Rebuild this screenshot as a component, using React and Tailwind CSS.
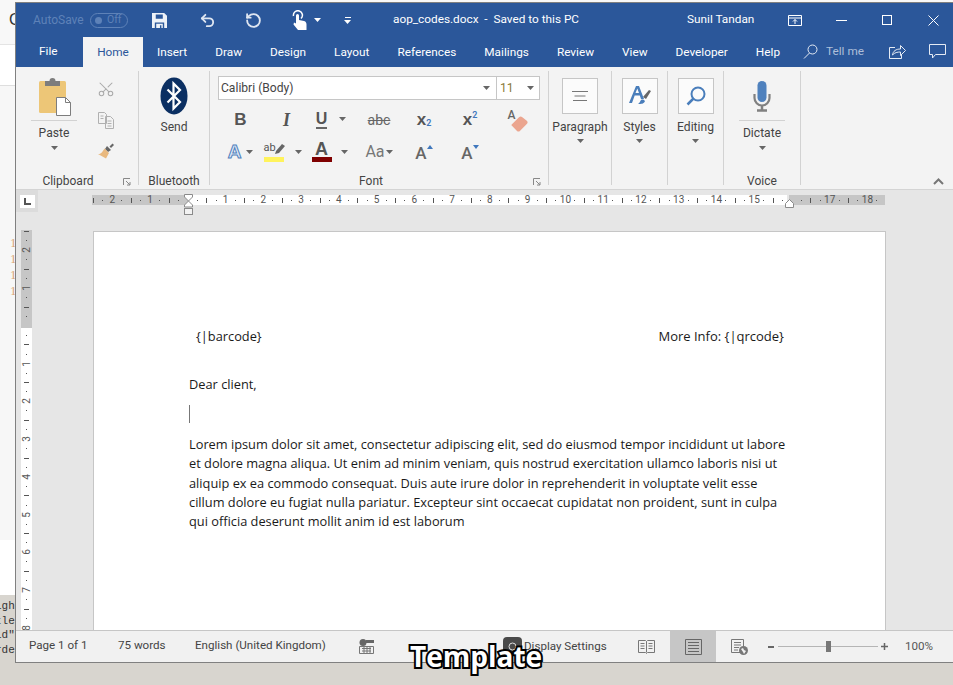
import React from 'react';
import { Undo2, RotateCcw, Scissors } from 'lucide-react';

const tabs = ['Insert', 'Draw', 'Design', 'Layout', 'References', 'Mailings', 'Review', 'View', 'Developer', 'Help'];

const bodyLines = [
    'Lorem ipsum dolor sit amet, consectetur adipiscing elit, sed do eiusmod tempor incididunt ut labore',
    'et dolore magna aliqua. Ut enim ad minim veniam, quis nostrud exercitation ullamco laboris nisi ut',
    'aliquip ex ea commodo consequat. Duis aute irure dolor in reprehenderit in voluptate velit esse',
    'cillum dolore eu fugiat nulla pariatur. Excepteur sint occaecat cupidatat non proident, sunt in culpa',
    'qui officia deserunt mollit anim id est laborum',
];

// small dropdown triangle used all over the ribbon
const Caret = ({ color = '#666', className = '' }) => (
    <svg width="7" height="4" viewBox="0 0 7 4" className={className}>
        <path d="M0 0h7L3.5 4z" fill={color} />
    </svg>
);

const Launcher = () => (
    <svg width="8" height="8" viewBox="0 0 8 8" className="absolute right-[7px] bottom-[-1px]">
        <path d="M.5 7V.5H7M3 3l4 4M7 4v3H4" fill="none" stroke="#888" />
    </svg>
);

const GroupLabel = ({ children }) => (
    <div className="mb-[-3px] mt-auto text-center text-[12px] leading-[14px] text-[#444]">{children}</div>
);

const Tick = ({ k, vertical }) => {
    const n = Math.abs(k) / 4;
    // 0 has no mark, 16 sits under the right indent marker
    if (k === 0 || k === 64) return null;
    if (k % 4 === 0) {
        return <span className={`text-[10px] leading-none text-[#555] ${vertical ? '-rotate-90' : ''}`}>{n}</span>;
    }
    if (k % 2 === 0) {
        return <span className={vertical ? 'h-px w-[5px] bg-[#555]' : 'h-[5px] w-px bg-[#555]'} />;
    }
    return <span className="h-px w-px bg-[#555]" />;
};

const hTicks = Array.from({ length: 84 }, (_, i) => i - 10);
const vTicks = Array.from({ length: 44 }, (_, i) => i - 10);

const HRuler = () => (
    <div className="relative mt-[5px] h-[10px] w-[793px] bg-[linear-gradient(to_right,#c6c6c6_96px,#fff_96px,#fff_695px,#e6e6e6_695px,#e6e6e6_697px,#c6c6c6_697px)]">
        <div className="ml-[-3.2px] flex h-full overflow-hidden">
            {hTicks.map((k) => (
                <div key={k} className="flex h-full w-[9.45px] shrink-0 items-center justify-center">
                    <Tick k={k} />
                </div>
            ))}
        </div>
        {/* indent markers */}
        <svg width="10" height="21" viewBox="0 0 10 21" className="absolute left-[92px] top-[-1px]">
            <path d="M.5.5h8V3L4.5 7 .5 3zM4.5 7l4 4v2h-8v-2z" fill="#fff" stroke="#8a8a8a" />
            <rect x=".5" y="14.5" width="8" height="6" fill="#f2f2f2" stroke="#8a8a8a" />
        </svg>
        <svg width="10" height="9" viewBox="0 0 10 9" className="absolute left-[693px] top-[4px]">
            <path d="M.5 8.5V4.500l4-4 4 4v4z" fill="#fff" stroke="#8a8a8a" />
        </svg>
    </div>
);

const VRuler = () => (
    <div className="ml-[5px] mt-[18px] h-[400px] w-[11px] overflow-hidden bg-[linear-gradient(to_bottom,#c6c6c6_98px,#fff_98px)]">
        <div className="mt-[-3.2px] flex flex-col">
            {vTicks.map((k) => (
                <div key={k} className="flex h-[9.45px] w-full shrink-0 items-center justify-center">
                    <Tick k={k} vertical />
                </div>
            ))}
        </div>
    </div>
);

const BigBox = ({ children }) => (
    <div className="mx-auto mt-[7px] flex h-[36px] w-[36px] items-center justify-center border border-[#c6c6c6] bg-[#fbfbfb]">
        {children}
    </div>
);

const MenuGroup = ({ width, label, children }) => (
    <div className={`flex h-[114px] flex-col items-center border-r border-[#d2d2d2] ${width}`}>
        <div className="w-full">
            <BigBox>{children}</BigBox>
        </div>
        <div className="mt-[4px] text-[12.1px] leading-[18px] text-[#444]">{label}</div>
        <Caret className="mt-[3px]" />
    </div>
);

const FontCell = ({ width, children }) => (
    <div className={`flex h-[32px] items-center justify-center ${width}`}>{children}</div>
);

const cellWidths = ['w-[45px]', 'w-[47px]', 'w-[47px]', 'w-[44px]', 'w-[46px]', 'w-[46px]', 'w-[47px]'];

const Ribbon = () => (
    <div className="flex h-[123px] border-b border-[#d4d4d4] bg-[#f3f3f3] pt-[4px] text-[#444]">
        {/* Clipboard */}
        <div className="relative flex h-[114px] w-[123px] flex-col border-r border-[#d2d2d2]">
            <div className="flex">
                <div className="ml-[15px] flex w-[46px] flex-col items-center">
                    <svg width="36" height="38" viewBox="0 0 36 38" className="mt-[7px]">
                        <rect x="3" y="3" width="27" height="32" rx="1.5" fill="#edc677" />
                        <path d="M9 3h15v5H9zM13.5 3a3 3 0 0 1 6 0z" fill="#7d7d7d" />
                        <path d="M20.5 19.5h9l5 5v13h-14z" fill="#fff" stroke="#7d7d7d" />
                        <path d="M29.5 19.5v5h5" fill="none" stroke="#7d7d7d" />
                    </svg>
                    <div className="mt-[4px] h-px w-full bg-[#d2d2d2]" />
                    <div className="mt-[3px] text-[12.1px] leading-[18px]">Paste</div>
                    <Caret className="mt-[4px]" />
                </div>
                <div className="ml-[14px] flex w-[30px] flex-col items-center">
                    <Scissors size={18} strokeWidth={1.4} color="#aaaaaa" className="mt-[9px] -rotate-90" />
                    <svg width="18" height="18" viewBox="0 0 18 18" className="mt-[13px]">
                        <path d="M1.5 1.5h6l2 2v9h-8zM8.5 5.5h5l3 3v9h-8z" fill="#f3f3f3" stroke="#b0b0b0" />
                        <path d="M3.5 5h3M3.5 7.5h3M10.5 10h4M10.5 12.500h4M10.500 15h4" stroke="#b0b0b0" />
                    </svg>
                    <svg width="18" height="18" viewBox="0 0 18 18" className="mt-[13px]">
                        <path d="M10 4l4 4-3 2-3-3z" fill="#666" />
                        <path d="M12.500 4.500L15.500 1.500l1.500 1.500-3 3z" fill="#666" />
                        <path d="M7.500 6.500l4.500 4.500-3 5.500-8-4.500c3 .5 5-3 6.500-5.500z" fill="#e9b97f" />
                    </svg>
                </div>
            </div>
            <GroupLabel>
                <span className="mr-[18px]">Clipboard</span>
            </GroupLabel>
            <Launcher />
        </div>

        {/* Bluetooth */}
        <div className="flex h-[114px] w-[71px] flex-col items-center border-r border-[#d2d2d2]">
            <svg width="28" height="38" viewBox="0 0 28 38" className="mt-[6px]">
                <ellipse cx="14" cy="19" rx="13.500" ry="18.500" fill="#0b2f62" />
                <path d="M7.500 12.500L20 25l-6.500 6.500V6.500L20 13 7.500 25.500" fill="none" stroke="#fff" strokeWidth="2.200" />
            </svg>
            <div className="mt-[3px] text-[12.1px] leading-[18px]">Send</div>
            <GroupLabel>Bluetooth</GroupLabel>
        </div>

        {/* Font */}
        <div className="relative flex h-[114px] w-[339px] flex-col border-r border-[#d2d2d2] pl-[8px]">
            <div className="mt-[5px] flex h-[24px]">
                <div className="flex w-[279px] items-center border border-[#c6c6c6] bg-white pl-[2px] pr-[6px] text-[12.1px]">
                    <span>Calibri (Body)</span>
                    <Caret className="ml-auto" />
                </div>
                <div className="ml-[-1px] flex w-[44px] items-center border border-[#c6c6c6] bg-white pl-[3px] pr-[5px] text-[12.1px]">
                    <span className="text-[#8a7a3a]">11</span>
                    <Caret className="ml-auto" />
                </div>
            </div>
            <div className="mt-[4px] flex">
                <FontCell width={cellWidths[0]}>
                    <span className="font-['Liberation_Sans'] text-[17px] font-bold text-[#555]">B</span>
                </FontCell>
                <FontCell width={cellWidths[1]}>
                    <span className="font-['Liberation_Serif'] text-[18px] font-bold italic text-[#555]">I</span>
                </FontCell>
                <FontCell width={cellWidths[2]}>
                    <span className="ml-[-5px] border-b-2 border-[#666] font-['Liberation_Sans'] text-[16px] font-bold leading-[16px] text-[#555]">U</span>
                    <Caret className="ml-[12px] mb-[3px]" />
                </FontCell>
                <FontCell width={cellWidths[3]}>
                    <span className="text-[14px] text-[#666] line-through">abc</span>
                </FontCell>
                <FontCell width={cellWidths[4]}>
                    <span className="font-['Liberation_Sans'] text-[17px] font-bold text-[#555]">x</span>
                    <span className="mt-[8px] text-[9px] font-semibold text-[#3f77bd]">2</span>
                </FontCell>
                <FontCell width={cellWidths[5]}>
                    <span className="font-['Liberation_Sans'] text-[17px] font-bold text-[#555]">x</span>
                    <span className="mb-[8px] text-[9px] font-semibold text-[#3f77bd]">2</span>
                </FontCell>
                <FontCell width={cellWidths[6]}>
                    <div className="relative h-[24px] w-[20px]">
                        <span className="absolute left-[1px] top-[-2px] text-[12px] font-medium text-[#666]">A</span>
                        <svg width="20" height="16" viewBox="0 0 18 14" className="absolute left-[2px] top-[8px]">
                            <path d="M2 8l7-7c1-1 2-1 3 0l4 3c1 1 1 2 0 3l-6 6c-1 1-2 1-3 0z" fill="#eba58f" />
                        </svg>
                    </div>
                </FontCell>
            </div>
            <div className="flex">
                <FontCell width={cellWidths[0]}>
                    <span className="font-['Liberation_Sans'] text-[19px] font-bold text-[#dfe9f6] [-webkit-text-stroke:1px_#4f81bd]">A</span>
                    <Caret className="ml-[5px]" />
                </FontCell>
                <FontCell width={cellWidths[1]}>
                    <div className="ml-[-8px] flex flex-col items-center">
                        <div className="flex h-[15px] items-start">
                            <span className="text-[11px] leading-[12px] text-[#555]">ab</span>
                            <svg width="12" height="12" viewBox="0 0 12 12" className="ml-[-2px] mt-[1px]">
                                <path d="M1 11l1-3 6-7 3 2-6 7z" fill="#666" />
                            </svg>
                        </div>
                        <div className="h-[5px] w-[20px] bg-[#fff35c]" />
                    </div>
                    <Caret className="ml-[9px]" />
                </FontCell>
                <FontCell width={cellWidths[2]}>
                    <div className="ml-[-8px] flex flex-col items-center">
                        <span className="font-['Liberation_Sans'] text-[18px] font-bold leading-[15px] text-[#555]">A</span>
                        <div className="h-[5px] w-[20px] bg-[#7f0000]" />
                    </div>
                    <Caret className="ml-[9px]" />
                </FontCell>
                <FontCell width={cellWidths[3]}>
                    <span className="text-[16px] text-[#777]">Aa</span>
                    <Caret className="ml-[1px]" />
                </FontCell>
                <FontCell width={cellWidths[4]}>
                    <span className="mt-[3px] text-[17px] font-medium text-[#666]">A</span>
                    <svg width="6" height="4" viewBox="0 0 6 4" className="mb-[10px]">
                        <path d="M0 4h6L3 0z" fill="#3f77bd" />
                    </svg>
                </FontCell>
                <FontCell width={cellWidths[5]}>
                    <span className="mt-[3px] text-[17px] font-medium text-[#666]">A</span>
                    <svg width="6" height="4" viewBox="0 0 6 4" className="mb-[10px]">
                        <path d="M0 0h6L3 4z" fill="#3f77bd" />
                    </svg>
                </FontCell>
            </div>
            <GroupLabel>
                <span className="mr-[24px]">Font</span>
            </GroupLabel>
            <Launcher />
        </div>

        <MenuGroup width="w-[63px]" label="Paragraph">
            <svg width="16" height="10" viewBox="0 0 16 10">
                <path d="M0 .5h16M2.500 5h11M1 9.500h14" stroke="#777" />
            </svg>
        </MenuGroup>
        <MenuGroup width="w-[56px]" label="Styles">
            <svg width="24" height="24" viewBox="0 0 24 24">
                <path d="M1 19L8 2h3l5 13h-3l-1.200-3.500H6.700L4 19zM7.500 9h3.500L9.300 4.500z" fill="#4a7ebb" />
                <path d="M15 13l6-7 2 1-5 8z" fill="#666" />
                <path d="M13 16c2-1 3 0 4 1-1 3-4 3-7 3 2-1 2-3 3-4z" fill="#4a7ebb" />
            </svg>
        </MenuGroup>
        <MenuGroup width="w-[56px]" label="Editing">
            <svg width="20" height="20" viewBox="0 0 20 20">
                <circle cx="12" cy="8" r="6.500" fill="none" stroke="#4a7ebb" strokeWidth="2" />
                <path d="M7.500 12.500L1.500 18.500" stroke="#4a7ebb" strokeWidth="2.500" />
            </svg>
        </MenuGroup>

        {/* Voice */}
        <div className="flex h-[114px] w-[77px] flex-col items-center border-r border-[#d2d2d2]">
            <svg width="18" height="31" viewBox="0 0 18 31" className="mt-[10px]">
                <rect x="4.500" y="0" width="9" height="21" rx="4.500" fill="#4f81bd" />
                <path d="M1.500 13v4a7.500 7.500 0 0 0 15 0v-4" fill="none" stroke="#808080" strokeWidth="2.200" />
                <path d="M9 24v5M4 29.500h10" stroke="#808080" strokeWidth="2.500" />
            </svg>
            <div className="mt-[8px] h-px w-[46px] bg-[#d2d2d2]" />
            <div className="mt-[3px] text-[12.1px] leading-[18px]">Dictate</div>
            <Caret className="mt-[4px]" />
            <GroupLabel>Voice</GroupLabel>
        </div>

        {/* collapse arrow */}
        <div className="flex h-[114px] flex-1 items-end justify-end pr-[12px]">
            <svg width="11" height="7" viewBox="0 0 11 7">
                <path d="M1 6l4.500-4.500L10 6" fill="none" stroke="#777" strokeWidth="2" />
            </svg>
        </div>
    </div>
);

const TitleBar = () => (
    <div className="flex h-[34px] items-center bg-[#2b579a] text-[11.8px] text-white">
        <div className="flex w-[377px] items-center pl-[17px]">
            <span className="w-[50px] text-[12px] text-[#5e82b8]">AutoSave</span>
            <div className="ml-[7px] flex h-[15px] w-[38px] items-center rounded-full border border-[#5e82b8] pl-[4px]">
                <span className="h-[7px] w-[7px] rounded-full bg-[#5e82b8]" />
                <span className="ml-[5px] text-[10.5px] leading-none text-[#5e82b8]">Off</span>
            </div>
            <svg width="15" height="15" viewBox="0 0 16 16" className="ml-[24px]">
                <path
                    fillRule="evenodd"
                    d="M0 0h13l3 3v13H0zM4 1.500v4.500h7.500V1.500zM3 10v6h10v-6zM4.500 11.500h7V16h-1.500v-3H8.500v3h-4z"
                    fill="#eef2f8"
                />
            </svg>
            <Undo2 size={17} strokeWidth={2.6} color="#dfe6f1" className="ml-[32px]" />
            <RotateCcw size={17} strokeWidth={2.6} color="#dfe6f1" className="ml-[29px]" />
            <svg width="16" height="20" viewBox="0 0 16 20" className="ml-[29px]">
                <path d="M2.500 6a4.500 4.500 0 1 1 7.500 2.500" fill="none" stroke="#fff" strokeWidth="1.500" />
                <path d="M5 5.500a1.500 1.500 0 0 1 3 0V10l5 1c2 .5 2.500 2 2.500 3.500V20H7L2.500 14.500 3 12.500l2 1z" fill="#fff" />
            </svg>
            <Caret color="#fff" className="ml-[7px]" />
            <div className="ml-[23px] flex flex-col items-center gap-[2px]">
                <span className="h-px w-[6px] bg-white" />
                <Caret color="#fff" />
            </div>
        </div>
        <div className="w-[294px] whitespace-pre">aop_codes.docx  -  Saved to this PC</div>
        <div className="w-[85px]">Sunil Tandan</div>
        <div className="flex w-[46px] justify-center">
            <svg width="14" height="11" viewBox="0 0 14 11">
                <path d="M.5.500h13v10H.5zM.5 3h13M7 9V4.500M5 6.500l2-2 2 2" fill="none" stroke="#fff" />
            </svg>
        </div>
        <div className="flex w-[46px] justify-center">
            <span className="h-px w-[11px] bg-white" />
        </div>
        <div className="flex w-[46px] justify-center">
            <span className="h-[10px] w-[10px] border border-white" />
        </div>
        <div className="flex w-[46px] justify-center">
            <svg width="11" height="11" viewBox="0 0 11 11">
                <path d="M.5.500l10 10M10.500.500l-10 10" stroke="#fff" />
            </svg>
        </div>
    </div>
);

const TabRow = () => (
    <div className="flex h-[30px] bg-[#2b579a] text-[11.8px] text-white">
        <div className="flex w-[784px] shrink-0">
            <div className="w-[67px] shrink-0 pl-[23px] pt-[6px]">File</div>
            <div className="flex w-[60px] shrink-0 items-center justify-center bg-[#f3f3f3] pt-[2px] text-[#2b579a]">Home</div>
            {tabs.map((tab) => (
                <div key={tab} className="flex shrink-0 items-center whitespace-nowrap px-[14px] pt-[2px]">
                    {tab}
                </div>
            ))}
        </div>
        <div className="flex items-center pb-[1px]">
            <svg width="15" height="15" viewBox="0 0 15 15" className="ml-[3px]">
                <circle cx="9.500" cy="5.500" r="4.500" fill="none" stroke="#e5ebf4" />
                <path d="M6.500 9L1 14.500" stroke="#e5ebf4" />
            </svg>
            <span className="ml-[8px] w-[40px] whitespace-nowrap text-[#aebfd9]">Tell me</span>
            <svg width="17" height="15" viewBox="0 0 17 15" className="ml-[23px] shrink-0">
                <path d="M6 3.500H.5v11h12V10" fill="none" stroke="#e5ebf4" />
                <path d="M3.500 11c.5-4 3.500-6 8-6V1.500l5 5-5 5V8c-3 0-6 .5-8 3z" fill="none" stroke="#e5ebf4" />
            </svg>
            <svg width="17" height="15" viewBox="0 0 17 15" className="ml-[23px] shrink-0">
                <path d="M.5.500h16v10H6.500l-3 3.500v-3.500h-3z" fill="none" stroke="#e5ebf4" />
            </svg>
        </div>
    </div>
);

const StatusBar = () => (
    <div className="flex h-[32px] border-t border-[#c6c6c6] bg-[#f1f1f1] text-[11.6px] text-[#444]">
        <div className="flex w-[330px] items-center pb-[1px]">
            <span className="ml-[13px] w-[89px]">Page 1 of 1</span>
            <span className="w-[77px]">75 words</span>
            <span>English (United Kingdom)</span>
        </div>
        <div className="flex items-center">
            <svg width="15" height="15" viewBox="0 0 15 15" className="ml-[13px]">
                <circle cx="4" cy="3.500" r="3.500" fill="#666" />
                <path d="M7 1h8v3H7z" fill="#666" />
                <path d="M.5 7.500h14v7H.5zM3 9.500h9M3 12h9M5 8v6M8 8v6M11 8v6" fill="none" stroke="#777" />
            </svg>
            <div className="ml-[129px] flex h-[19px] w-[19px] items-center justify-center rounded-sm bg-[#4a4a4a]">
                <svg width="11" height="11" viewBox="0 0 11 11">
                    <circle cx="5.500" cy="5.500" r="3.500" fill="none" stroke="#ddd" />
                </svg>
            </div>
            <span className="ml-[2px] w-[112px] whitespace-nowrap">Display Settings</span>
            <svg width="17" height="16" viewBox="0 0 17 16" className="ml-[2px]">
                <path d="M.5 1.500h7l1 1 1-1h7v12h-7l-1 1-1-1h-7zM8.500 2.500v11M2.500 4.500h4M2.500 7h4M2.500 9.500h4M10.500 4.500h4M10.500 7h4M10.500 9.500h4" fill="none" stroke="#777" />
            </svg>
            <div className="ml-[15px] flex h-[31px] w-[46px] items-center justify-center bg-[#c6c6c6]">
                <svg width="17" height="16" viewBox="0 0 17 16">
                    <path d="M.5.500h16v15H.5zM3 3.500h11M3 6.500h11M3 9.500h11M3 12.500h11" fill="none" stroke="#666" />
                </svg>
            </div>
            <svg width="17" height="16" viewBox="0 0 17 16" className="ml-[15px]">
                <path d="M9 13.500H.5V.500h12v7M3 3.500h7M3 6h7M3 8.500h5M3 11h4" fill="none" stroke="#777" />
                <circle cx="12.500" cy="11.500" r="4.500" fill="#777" />
                <path d="M10 10l2-1 1 2 2 1-2 3-1-2z" fill="#f1f1f1" />
            </svg>
            <span className="ml-[20px] h-[2px] w-[6px] bg-[#666]" />
            <div className="relative ml-[4px] h-px w-[100px] bg-[#b5b5b5]">
                <span className="absolute left-[48px] top-[-5px] h-[11px] w-[5px] bg-[#777]" />
            </div>
            <svg width="7" height="7" viewBox="0 0 7 7" className="ml-[3px]">
                <path d="M0 3.500h7M3.500 0v7" stroke="#666" strokeWidth="1.500" />
            </svg>
            <span className="ml-[17px] text-[#555]">100%</span>
        </div>
    </div>
);

const Page = () => (
    <div className="ml-[1px] mt-[26px] h-[420px] w-[793px] border border-[#c6c6c6] bg-white pl-[95px] pt-[95px] font-['Open_Sans',sans-serif] text-[12.8px] leading-[19.4px] text-[#1a1a1a]">
        <div className="flex w-[596px] justify-between">
            <span className="pl-[7px]">{'{|barcode}'}</span>
            <span className="pr-px text-[13px]">{'More Info: {|qrcode}'}</span>
        </div>
        <p className="mt-[29px]">Dear client,</p>
        <div className="mt-[10px] h-[18px] w-px bg-[#777]" />
        <div className="mt-[12px] w-[620px]">
            {bodyLines.map((line) => (
                <p key={line} className="whitespace-nowrap">
                    {line}
                </p>
            ))}
        </div>
    </div>
);

const LeftStrip = () => (
    <div className="flex w-[15px] flex-col bg-[#d8d5cf]">
        <div className="h-[45px] border-b border-[#e4e4e4] bg-[#f8f8f8] pt-[10px] font-['Liberation_Sans'] text-[16px] leading-[20px] text-[#333]">
            <span className="ml-[9px]">C</span>
        </div>
        <div className="h-[41px] border-b border-[#dedede] bg-white" />
        <div className="h-[454px] bg-[#f7f7f7] pt-[149px] font-['Liberation_Serif'] text-[13px] leading-[16px] text-[#d9a679]">
            <p className="pl-[10px]">1</p>
            <p className="pl-[10px]">1</p>
            <p className="pl-[10px]">1</p>
            <p className="pl-[10px]">1</p>
        </div>
        <div className="h-[55px] bg-white" />
        <div className="overflow-hidden whitespace-pre pt-[4px] font-['Liberation_Mono'] text-[11px] leading-[14.500px] text-[#333]">
            <p className="ml-[-5px]">igh</p>
            <p className="ml-[-5px]">tle</p>
            <p className="ml-[-5px]">id"</p>
            <p className="ml-[-5px]">rde</p>
        </div>
    </div>
);

const App = () => (
    <div className="relative flex h-[685px] w-[953px] overflow-hidden bg-[#d8d5cf] font-['Roboto',sans-serif]">
        <LeftStrip />
        <div className="flex flex-1 flex-col">
            <div className="h-[2px] bg-[#f8f8f8]" />
            <div className="flex h-[661px] flex-col border-l border-t border-b border-[#808080]">
                <TitleBar />
                <TabRow />
                <Ribbon />
                <div className="flex h-[440px] overflow-hidden bg-[#e6e6e6]">
                    <div className="w-[76px] shrink-0">
                        <div className="flex h-[22px] w-[22px] items-center justify-center bg-[#dcdcdc]">
                            <div className="flex h-[13px] w-[15px] items-center justify-center bg-white">
                                <svg width="7" height="7" viewBox="0 0 7 7">
                                    <path d="M1 0v6h6" fill="none" stroke="#555" strokeWidth="2" />
                                </svg>
                            </div>
                        </div>
                        <VRuler />
                    </div>
                    <div>
                        <HRuler />
                        <Page />
                    </div>
                </div>
                <StatusBar />
            </div>
        </div>
        {/* caption burned into the screenshot */}
        <div className="absolute left-[410px] top-[637px] font-['Open_Sans',sans-serif] text-[28px] font-bold leading-[38px] text-white [-webkit-text-stroke:4px_black] [paint-order:stroke_fill]">
            Template
        </div>
    </div>
);

export default App;
